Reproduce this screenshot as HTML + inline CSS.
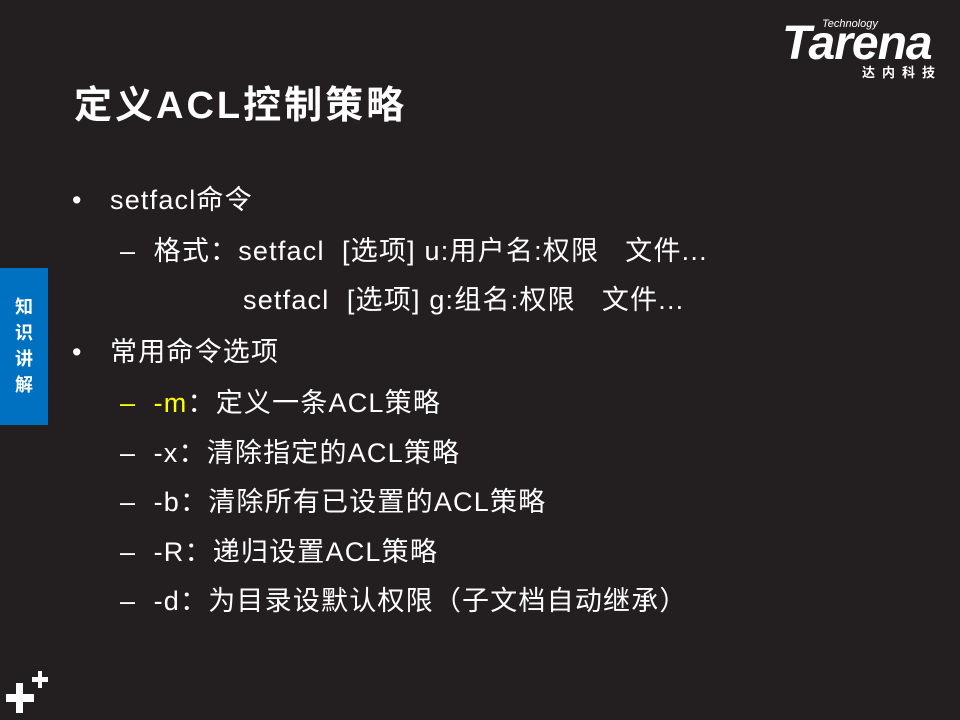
<!DOCTYPE html>
<html><head><meta charset="utf-8"><style>
body{margin:0;width:960px;height:720px;background:#231f20;position:relative;overflow:hidden;font-family:"Liberation Sans","Noto Sans CJK SC",sans-serif;color:#fff}
.a{position:absolute;white-space:pre}
.t{left:74px;top:74px;font-size:38px;font-weight:bold;letter-spacing:3px}
.l{font-size:27px;line-height:30px;letter-spacing:1.2px}
.tab{position:absolute;left:0;top:268px;width:48px;height:157px;background:#0070c0}
.tab div{position:absolute;left:0;width:48px;text-align:center;font-size:18px;font-weight:bold;line-height:26px;top:26px}
</style></head><body>
<div class="a" style="top:18px;font-size:11px;font-style:italic;left:822px">Technology</div>
<div class="a" style="left:782px;top:16px;font-size:48px;font-weight:bold;font-style:italic;letter-spacing:-1px;line-height:56px">Tarena</div>
<div class="a" style="left:862px;top:62px;font-size:13px;font-weight:bold;letter-spacing:7px">达内科技</div>
<div class="a t">定义ACL控制策略</div>
<div class="tab"><div>知<br>识<br>讲<br>解</div></div>
<div class="a l" style="left:72px;top:185px">•</div>
<div class="a l" style="left:110px;top:185px">setfacl命令</div>
<div class="a l" style="left:120px;top:236px">–  格式：setfacl  [选项] u:用户名:权限   文件...</div>
<div class="a l" style="left:243px;top:285px">setfacl  [选项] g:组名:权限   文件...</div>
<div class="a l" style="left:72px;top:337px">•</div>
<div class="a l" style="left:110px;top:337px">常用命令选项</div>
<div class="a l" style="left:120px;top:388px"><span style="color:#ffff00">–  -m</span>：定义一条ACL策略</div>
<div class="a l" style="left:120px;top:438px">–  -x：清除指定的ACL策略</div>
<div class="a l" style="left:120px;top:487px">–  -b：清除所有已设置的ACL策略</div>
<div class="a l" style="left:120px;top:537px">–  -R：递归设置ACL策略</div>
<div class="a l" style="left:120px;top:586px">–  -d：为目录设默认权限（子文档自动继承）</div>
<svg style="position:absolute;left:0;top:660px" width="60" height="60"><path fill="#fff" d="M16 23h7v11h11v8H23v11h-7V42H6v-8h10zM38 11h4v6h6v5h-6v6h-4v-6h-6v-5h6z"/></svg>
</body></html>
